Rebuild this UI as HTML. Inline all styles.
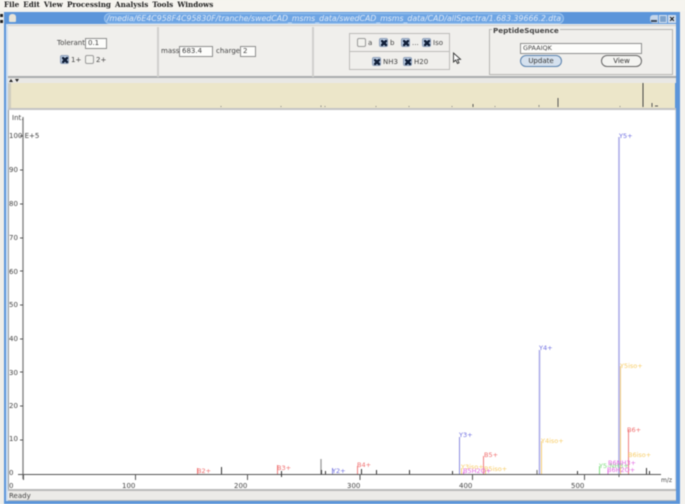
<!DOCTYPE html>
<html><head><meta charset="utf-8">
<style>
html,body{margin:0;padding:0;background:#f4f2ee;}
body{width:685px;height:504px;overflow:hidden;position:relative;font-family:"DejaVu Sans","Liberation Sans",sans-serif;}
#wrap{position:absolute;left:0;top:0;width:685px;height:504px;filter:blur(.5px);}
.a{position:absolute;box-sizing:border-box;}
.t{position:absolute;font-size:7px;color:#444;white-space:nowrap;line-height:10px;}
.in{position:absolute;box-sizing:border-box;background:#fdfdfb;border:1px solid #8f8f8f;font-size:7px;color:#444;line-height:9px;padding-left:2px;}
.cb{position:absolute;box-sizing:border-box;width:9px;height:9px;border:1px solid #8d9fb8;background:#b9cbe2;border-radius:2px;}
.cb.x::after{content:"";position:absolute;left:0.5px;top:0.5px;width:6px;height:6px;background:
 linear-gradient(45deg,transparent 36%,#12203a 36%,#12203a 64%,transparent 64%),
 linear-gradient(-45deg,transparent 36%,#12203a 36%,#12203a 64%,transparent 64%);}
.cb.e{background:#f2f2ee;border-color:#9a9a9a;}
.btn{position:absolute;box-sizing:border-box;border-radius:7px;font-size:7px;color:#333;text-align:center;line-height:10px;height:12px;}
</style></head><body>
<div id="wrap">
<div class="a" style="left:0;top:0;width:685px;height:11px;background:#f6f4ef;"></div>
<div style="position:absolute;left:4px;top:0;font:bold 7.2px/9px 'DejaVu Serif','Liberation Serif',serif;color:#222;word-spacing:1.6px;white-space:nowrap;">File Edit View Processing Analysis Tools Windows</div>

<!-- window -->
<div class="a" style="left:0;top:11px;width:5px;height:493px;background:#f0eee9;"></div>
<div class="a" style="left:4px;top:12px;width:676px;height:492px;background:#5b95da;"></div>
<div class="a" style="left:6px;top:24px;width:2px;height:477px;background:#cfe0f2;"></div>
<div class="a" style="left:0;top:14px;width:3px;height:3px;background:#222;"></div>
<div class="a" style="left:0;top:20px;width:3px;height:3px;background:#222;"></div>
<div class="a" style="left:9px;top:14px;width:7px;height:8px;background:#e8e4d8;border-radius:3px 3px 1px 1px;"></div>
<!-- title capsule -->
<div class="a" style="left:104px;top:13px;width:460px;height:11px;background:#6ea5e4;border-radius:6px;border:1px solid #9cc4ee;"></div>
<div style="position:absolute;left:106px;top:13px;width:456px;text-align:center;font-size:7.8px;line-height:11px;color:#dfeaf7;white-space:nowrap;overflow:hidden;font-family:'DejaVu Sans',sans-serif;font-style:italic;">/media/6E4C958F4C95830F/tranche/swedCAD_msms_data/swedCAD_msms_data/CAD/allSpectra/1.683.39666.2.dta</div>
<!-- window controls -->
<div class="a" style="left:650px;top:15px;width:8px;height:8px;background:#c5d6ea;border-radius:3px 0 0 3px;"></div>
<div class="a" style="left:651px;top:20px;width:6px;height:2px;background:#39485c;"></div>
<div class="a" style="left:659px;top:15px;width:8px;height:8px;background:#7ea3cc;border:1px solid #d8e4f2;"></div>
<div class="a" style="left:668px;top:15px;width:8px;height:8px;background:#cfdcec;"></div>
<div style="position:absolute;left:668px;top:14px;width:8px;text-align:center;font:bold 9px/10px 'Liberation Sans',sans-serif;color:#111;">×</div>

<!-- toolbar -->
<div class="a" style="left:8px;top:24px;width:668px;height:54px;background:#f0efec;border-bottom:2px solid #a9abad;"></div>
<div class="a" style="left:8px;top:25px;width:668px;height:1px;background:#cfcfcc;"></div>
<div class="a" style="left:157px;top:27px;width:2px;height:50px;background:#d0d0cd;"></div>
<div class="a" style="left:312px;top:27px;width:2px;height:50px;background:#d0d0cd;"></div>

<div class="t" style="left:57px;top:38px;">Tolerant</div>
<div class="in" style="left:85px;top:38px;width:22px;height:11px;">0.1</div>
<div class="cb x" style="left:60px;top:55px;"></div><div class="t" style="left:71px;top:55px;">1+</div>
<div class="cb e" style="left:85px;top:55px;"></div><div class="t" style="left:96px;top:55px;">2+</div>

<div class="t" style="left:161px;top:46px;">mass</div>
<div class="in" style="left:179px;top:46px;width:34px;height:11px;">683.4</div>
<div class="t" style="left:216px;top:46px;">charge</div>
<div class="in" style="left:240px;top:46px;width:16px;height:11px;">2</div>

<!-- ion box -->
<div class="a" style="left:349px;top:33px;width:101px;height:37px;border:1px solid #bcbcb9;"></div>
<div class="a" style="left:349px;top:51px;width:101px;height:1px;background:#bcbcb9;"></div>
<div class="cb e" style="left:357px;top:38px;"></div><div class="t" style="left:368px;top:38px;">a</div>
<div class="cb x" style="left:379px;top:38px;"></div><div class="t" style="left:390px;top:38px;">b</div>
<div class="cb x" style="left:401px;top:38px;"></div><div class="t" style="left:412px;top:38px;">...</div>
<div class="cb x" style="left:422px;top:38px;"></div><div class="t" style="left:433px;top:38px;">Iso</div>
<div class="cb x" style="left:372px;top:57px;"></div><div class="t" style="left:383px;top:57px;">NH3</div>
<div class="cb x" style="left:403px;top:57px;"></div><div class="t" style="left:414px;top:57px;">H20</div>
<svg class="a" style="left:452px;top:52px;" width="10" height="13" viewBox="0 0 10 13"><path d="M1.500 1 L1.500 10 L3.800 8 L5.500 11.500 L7 10.800 L5.500 7.500 L8.500 7.300 Z" fill="#fff" stroke="#333" stroke-width=".9"/></svg>

<!-- PeptideSquence -->
<div class="a" style="left:489px;top:29px;width:184px;height:46px;border:1px solid #b5b5b2;"></div>
<div style="position:absolute;left:492px;top:26px;background:#f0efec;padding:0 1px;font:bold 7.2px/9px 'DejaVu Sans',sans-serif;color:#444;">PeptideSquence</div>
<div class="in" style="left:520px;top:43px;width:122px;height:11px;font-size:6.5px;">GPAAIQK</div>
<div class="btn" style="left:520px;top:55px;width:42px;background:#d5e1ee;border:1.500px solid #5a82ad;">Update</div>
<div class="btn" style="left:601px;top:55px;width:41px;background:#f4f4f1;border:1.500px solid #666;">View</div>

<!-- splitter -->
<div class="a" style="left:8px;top:78px;width:668px;height:5px;background:#e9e8e5;"></div>
<div class="a" style="left:9px;top:79px;width:0;height:0;border-left:2px solid transparent;border-right:2px solid transparent;border-bottom:3px solid #222;"></div>
<div class="a" style="left:15px;top:79px;width:0;height:0;border-left:2px solid transparent;border-right:2px solid transparent;border-top:3px solid #222;"></div>

<!-- strip + plot -->
<div class="a" style="left:8px;top:83px;width:3px;height:25px;background:#cfccbf;"></div>
<div class="a" style="left:11px;top:83px;width:664px;height:25px;background:#ece6c9;"></div>
<div class="a" style="left:8px;top:108px;width:668px;height:2px;background:#c4c4c4;"></div>
<div class="a" style="left:8px;top:110px;width:668px;height:379px;background:#fff;border-left:1px solid #9a9a9a;border-right:1px solid #ddd;"></div>

<svg class="a" style="left:0;top:0;" width="685" height="504" viewBox="0 0 685 504" font-family="DejaVu Sans, sans-serif" font-size="7">
 <!-- strip peaks -->
 <g stroke="#555" stroke-width="1" fill="none">
  <path d="M643 83V107" stroke="#444"/><path d="M558 98V107"/><path d="M473 104V107"/><path d="M652 103V107"/><path d="M655 106H658"/>
  <path d="M221 106V107M281 106V107M321 105.500V107M325 106V107M376 106V107M409 106V107M452 106V107M495 106V107M539 105V107M620 106V107" stroke="#888"/>
 </g>
 <!-- axes -->
 <path d="M23 117V479" stroke="#7d7d7d" stroke-width="1.300"/>
 <path d="M18 474.500H661" stroke="#555" stroke-width="1"/>
 <g stroke="#555" stroke-width="1">
  <path d="M20 136H23M20 170H23M20 204H23M20 238H23M20 271H23M20 305H23M20 339H23M20 372H23M20 406H23M20 440H23"/>
  <path d="M23.500 474V480M135.500 474V480M247.500 474V480M360 474V480M472.500 474V480M584.500 474V480"/>
 </g>
 <g fill="#444" font-size="7">
  <text x="12" y="120">Int.</text>
  <text x="9" y="138">100 E+5</text>
  <text x="9" y="172">90</text><text x="9" y="206">80</text><text x="9" y="240">70</text>
  <text x="9" y="274">60</text><text x="9" y="307">50</text><text x="9" y="341">40</text>
  <text x="9" y="375">30</text><text x="9" y="408">20</text><text x="9" y="441">10</text><text x="9" y="475">0</text>
  <text x="9" y="488">0</text><text x="122" y="488">100</text><text x="234" y="488">200</text><text x="347" y="488">300</text><text x="459" y="488">400</text><text x="571" y="488">500</text>
  <text x="661" y="482" font-size="6">m/z</text>
 </g>
 <!-- black peaks -->
 <g stroke="#333" stroke-width="1">
  <path d="M221.500 467V474M281.500 471V477M325.500 471V474M361.500 469V474M376.500 470V474M409.500 470V474M452.500 471V474M577.500 471V474M646.500 468V474M649.500 471V474"/>
  <path d="M321 459V474" stroke="#999" stroke-width="1.300"/><path d="M321.500 470V474"/>
  <path d="M537 470V474M619 470V477" stroke="#666"/>
 </g>
 <!-- coloured peaks -->
 <g stroke-width="1" fill="none">
  <path d="M197.500 468V474M277.500 465V474M357.500 466V474M483.500 456V474M628.500 430V474" stroke="#ef7f7f"/>
  <path d="M332.500 468V474M459.500 437V474" stroke="#8c8ce0"/>
  <path d="M539.500 350V474M619 137V474" stroke="#a8a8e8" stroke-width="1.500"/>
  <path d="M541.500 441V474M620.500 366V474M461.500 468V474M485.500 470V474" stroke="#f6cf7a"/>
  <path d="M599.500 466V474" stroke="#7fe07f"/>
  <path d="M463.500 472V474M608 470V474" stroke="#e67ae6"/>
 </g>
 <!-- labels -->
 <g font-size="6.500">
  <g fill="#f06a6a">
   <text x="197" y="473">B2+</text><text x="277" y="470">B3+</text><text x="357" y="467">B4+</text><text x="484" y="457">B5+</text><text x="627" y="432">B6+</text>
  </g>
  <g fill="#6a6ae0">
   <text x="332" y="473">Y2+</text><text x="459" y="437">Y3+</text><text x="539" y="350">Y4+</text><text x="619" y="138">Y5+</text>
  </g>
  <g fill="#f8cc66">
   <text x="620" y="368">Y5iso+</text><text x="541" y="443">Y4iso+</text><text x="461" y="469">Y3iso+</text><text x="484" y="471">B5iso+</text><text x="628" y="457">B6iso+</text>
  </g>
  <text x="599" y="468" fill="#7fdc7f">Y5-NH3+</text>
  <g fill="#e266e2">
   <text x="608" y="465">B6NH3+</text><text x="463" y="473">B5H2O+</text><text x="607" y="472">B6H2O+</text>
  </g>
 </g>
</svg>

<!-- status -->
<div class="a" style="left:8px;top:489px;width:668px;height:2px;background:#b9b9b9;"></div>
<div class="a" style="left:8px;top:491px;width:668px;height:10px;background:#ecebe8;border-bottom:1px solid #b5b5b5;"></div>
<div class="t" style="left:9px;top:491px;">Ready</div>
</div>
</body></html>
